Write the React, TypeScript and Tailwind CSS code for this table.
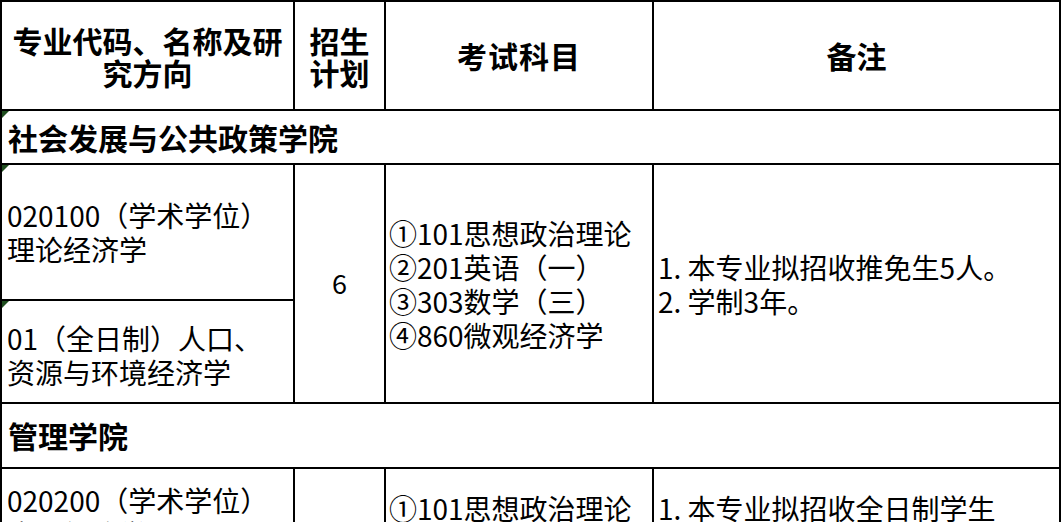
import type { ReactNode } from "react"

const font = { fontFamily: '"Noto Sans CJK SC", "Noto Sans", sans-serif' }

// Excel-style comment marker in the top-left corner of a cell
const Marker = () => (
  <span className="absolute left-0 top-0 h-0 w-0 border-r-[7px] border-t-[7px] border-r-transparent border-t-[#1f4d1f]" />
)

const Cell = ({ className = "", children }: { className?: string; children?: ReactNode }) => (
  <div className={`relative bg-white ${className}`}>{children}</div>
)

const exams = ["①101思想政治理论", "②201英语（一）", "③303数学（三）", "④860微观经济学"]

export default function App() {
  return (
    <div className="h-[522px] w-[1063px] overflow-hidden bg-white text-black" style={font}>
      <div className="grid w-[1061px] grid-cols-[291px_89px_266px_405px] grid-rows-[107px_52px_134px_101px_63px_140px] gap-[2px] bg-black p-[2px]">
        {/* 表头 */}
        <Cell className="flex items-center justify-center text-center text-[30px] font-bold leading-[32px]">
          专业代码、名称及研<br />究方向
        </Cell>
        <Cell className="flex items-center justify-center text-center text-[30px] font-bold leading-[32px]">
          招生<br />计划
        </Cell>
        <Cell className="flex items-center justify-center text-[30px] font-bold tracking-[1px]">考试科目</Cell>
        <Cell className="flex items-center justify-center text-[30px] font-bold">备注</Cell>

        {/* 社会发展与公共政策学院 */}
        <Cell className="col-span-4 flex items-center pl-[6px] text-[30px] font-bold">
          <Marker />
          社会发展与公共政策学院
        </Cell>

        <Cell className="flex flex-col justify-center pl-[5px] text-[28px] leading-[34px]">
          <Marker />
          <span>020100（学术学位）</span>
          <span>理论经济学</span>
        </Cell>
        <Cell className="row-span-2 flex items-center justify-center text-[27px]">6</Cell>
        <Cell className="row-span-2 flex flex-col justify-center whitespace-nowrap pl-[3px] text-[28px] leading-[34px]">
          {exams.map((e) => (
            <span key={e}>{e}</span>
          ))}
        </Cell>
        <Cell className="row-span-2 flex flex-col justify-center pl-[4px] text-[28px] leading-[34px]">
          <span>1. 本专业拟招收推免生5人。</span>
          <span>2. 学制3年。</span>
        </Cell>
        <Cell className="flex flex-col justify-center pl-[5px] pt-[6px] text-[28px] leading-[34px]">
          <Marker />
          <span>01（全日制）人口、</span>
          <span>资源与环境经济学</span>
        </Cell>

        {/* 管理学院 */}
        <Cell className="col-span-4 flex items-center pl-[6px] text-[30px] font-bold">管理学院</Cell>

        <Cell className="flex flex-col pl-[5px] pt-[14px] text-[28px] leading-[34px]">
          <span>020200（学术学位）</span>
          <span>应用经济学</span>
        </Cell>
        <Cell />
        <Cell className="flex flex-col whitespace-nowrap pl-[3px] pt-[22px] text-[28px] leading-[34px]">
          <span>①101思想政治理论</span>
        </Cell>
        <Cell className="flex flex-col pl-[4px] pt-[22px] text-[28px] leading-[34px]">
          <span>1. 本专业拟招收全日制学生</span>
        </Cell>
      </div>
    </div>
  )
}
